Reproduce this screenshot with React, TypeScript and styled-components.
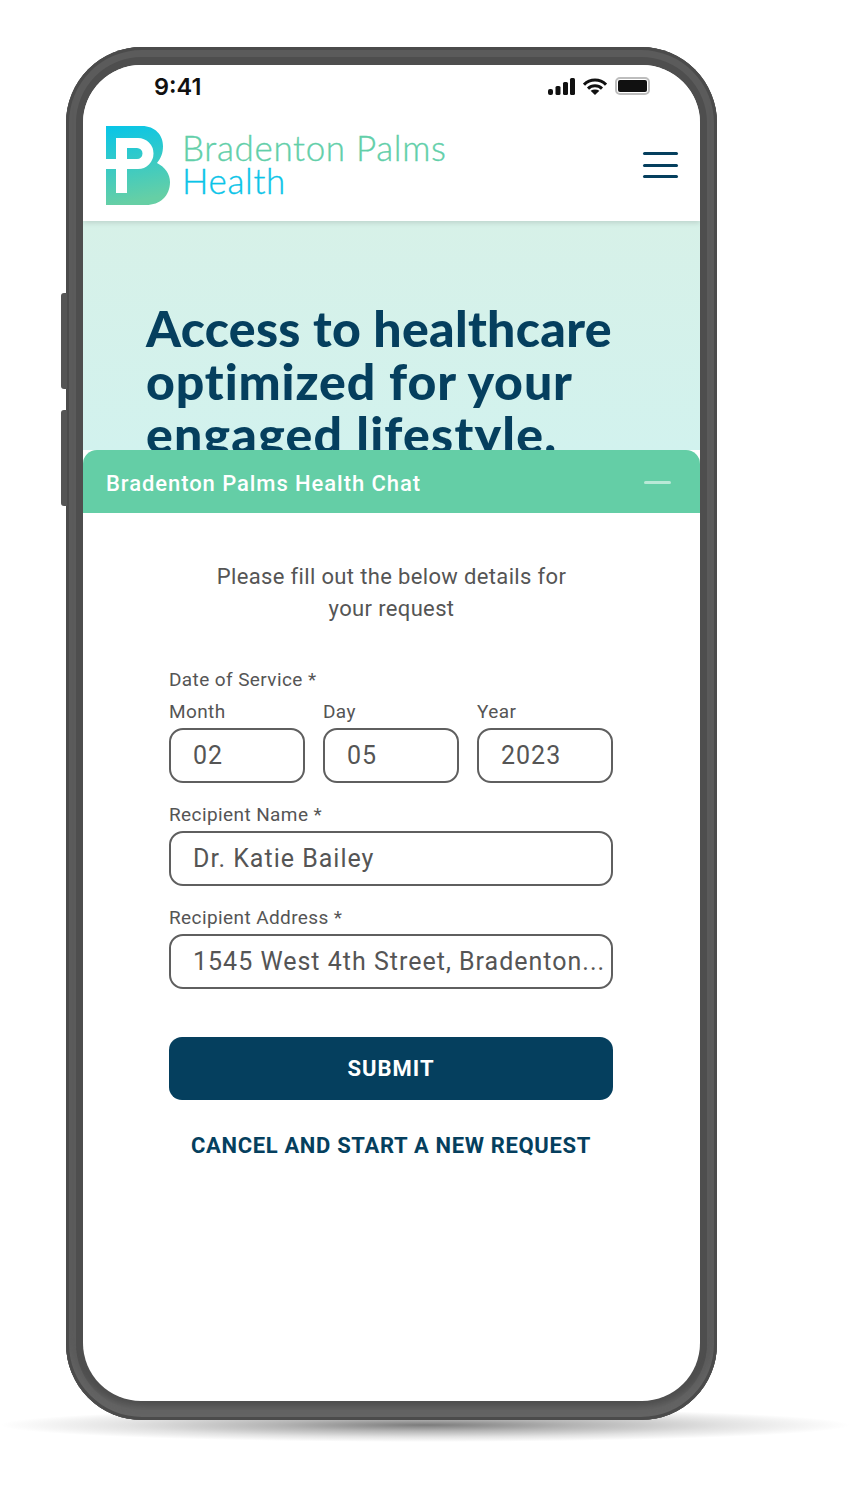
import React from "react";
import styled, { createGlobalStyle } from "styled-components";

const Global = createGlobalStyle`
  html, body { margin: 0; padding: 0; background: #fff; }
  body { font-family: Roboto, "Liberation Sans", sans-serif; }
  * { box-sizing: border-box; }
`;

const Stage = styled.div`
  position: relative;
  width: 864px;
  height: 1488px;
  padding: 47px 0 0 66px;
  overflow: hidden;
  background: #fff;
`;

const FloorShadow = styled.div`
  position: absolute;
  left: 0;
  top: 1408px;
  width: 850px;
  height: 34px;
  border-radius: 50%;
  background: radial-gradient(ellipse 50% 50% at 50% 50%, rgba(100,100,100,.85) 0%, rgba(140,140,140,.65) 35%, rgba(190,190,190,.45) 70%, rgba(255,255,255,0) 100%);
`;

const Phone = styled.div`
  position: relative;
  width: 651px;
  height: 1373px;
  padding: 18px 17px 19px 17px;
  border-radius: 76px;
  background: #4e4e4e;
  box-shadow: inset 0 0 0 3px #4b4b4b, inset 0 -14px 6px #636363, inset 0 0 0 10px #5b5b5b;
`;

const SideButton = styled.div<{ $top: number }>`
  position: absolute;
  left: -5px;
  top: ${(p) => p.$top}px;
  width: 6px;
  height: 96px;
  border-radius: 3px 0 0 3px;
  background: #555;
`;

const Screen = styled.div`
  position: relative;
  height: 100%;
  display: flex;
  flex-direction: column;
  border-radius: 58px;
  overflow: hidden;
  background: #fff;
`;

const Top = styled.header`
  position: relative;
  z-index: 1;
  flex: none;
  height: 156px;
  background: #fff;
  box-shadow: 0 2px 5px rgba(0, 0, 0, 0.12);
`;

const StatusBar = styled.div`
  display: flex;
  align-items: center;
  justify-content: space-between;
  height: 42px;
  padding: 0 50px 0 71px;
`;

const Time = styled.span`
  font-family: Inter, sans-serif;
  font-weight: 600;
  font-size: 23.5px;
  color: #111;
`;

const StatusIcons = styled.div`
  display: flex;
  align-items: center;
  gap: 8px;
`;

const Battery = styled.div`
  width: 35px;
  height: 18px;
  padding: 1px;
  border: 2px solid #bdbdbd;
  border-radius: 5px;
  &::after {
    content: "";
    display: block;
    height: 100%;
    background: #111;
    border-radius: 2px;
  }
`;

const BrandRow = styled.div`
  display: flex;
  align-items: center;
  height: 80px;
  margin-top: 18px;
  padding: 0 22px 0 23px;
`;

const BrandName = styled.div`
  margin: -2px 0 0 12px;
  font-family: Lato, sans-serif;
  font-weight: 300;
  font-size: 35px;
  line-height: 33px;
  letter-spacing: 0.65px;
  -webkit-text-stroke: 0.35px currentColor;
`;

const BrandLine = styled.div<{ $color: string }>`
  color: ${(p) => p.$color};
`;

const Burger = styled.div`
  margin-left: auto;
  display: flex;
  flex-direction: column;
  gap: 8.5px;
  width: 35px;
`;

const BurgerBar = styled.span`
  height: 3px;
  border-radius: 2px;
  background: #053f5e;
`;

const Hero = styled.section`
  flex: none;
  height: 229px;
  overflow: hidden;
  padding: 81px 20px 0 63px;
  background: linear-gradient(#d7f1e8, #d2f2ee);
`;

const HeroTitle = styled.h1`
  margin: 0;
  font-family: Lato, sans-serif;
  font-weight: 900;
  font-size: 50px;
  line-height: 53px;
  color: #053f5e;
`;

const HeroLine = styled.span<{ $tracking: number }>`
  display: block;
  white-space: nowrap;
  letter-spacing: ${(p) => p.$tracking}px;
`;

const Chat = styled.section`
  flex: 1;
  display: flex;
  flex-direction: column;
  align-items: center;
`;

const ChatHead = styled.div`
  align-self: stretch;
  display: flex;
  align-items: center;
  justify-content: space-between;
  height: 63px;
  padding: 4px 29px 0 23px;
  border-radius: 14px 14px 0 0;
  background: #64cea6;
  color: #fff;
  font-weight: 500;
  font-size: 22px;
  letter-spacing: 0.93px;
`;

const Minimize = styled.span`
  width: 27px;
  height: 3px;
  margin-top: -2px;
  border-radius: 2px;
  background: rgba(255, 255, 255, 0.55);
`;

const Intro = styled.p`
  margin: 48px 0 0;
  text-align: center;
  font-size: 22px;
  line-height: 32px;
  letter-spacing: 0.35px;
  color: #555;
`;

const Form = styled.form`
  width: 444px;
  margin: 44px 1px 0 0;
  display: flex;
  flex-direction: column;
`;

const Label = styled.div`
  font-size: 19px;
  line-height: 22px;
  letter-spacing: 0.4px;
  color: #555;
`;

const DateGrid = styled.div`
  display: grid;
  grid-template-columns: repeat(3, 136px);
  justify-content: space-between;
  margin-top: 10px;
`;

const FieldGroup = styled.div`
  display: flex;
  flex-direction: column;
  gap: 5px;
  margin-top: 21px;
`;

const DateGroup = styled.div`
  display: flex;
  flex-direction: column;
  gap: 5px;
`;

const Field = styled.div`
  display: flex;
  align-items: center;
  height: 55px;
  padding-left: 22px;
  border: 2px solid #5f5f5f;
  border-radius: 14px;
  font-size: 25px;
  letter-spacing: 1px;
  color: #555;
  white-space: nowrap;
  overflow: hidden;
`;

const Submit = styled.button`
  height: 63px;
  margin-top: 48px;
  border: 0;
  border-radius: 13px;
  background: #053f5e;
  color: #fff;
  font-family: Roboto, sans-serif;
  font-weight: 700;
  font-size: 22px;
  letter-spacing: 1px;
`;

const Cancel = styled.div`
  margin-top: 33px;
  text-align: center;
  font-weight: 700;
  font-size: 22px;
  line-height: 26px;
  letter-spacing: 0.66px;
  color: #053f5e;
`;

const Logo = () => (
  <svg width="64" height="79" viewBox="0 0 64 79" style={{ flex: "none" }}>
    <defs>
      <linearGradient id="lg" x1="0" y1="0" x2="0.15" y2="1">
        <stop offset="0" stopColor="#07c5e8" />
        <stop offset="1" stopColor="#66cfa5" />
      </linearGradient>
    </defs>
    <path
      fill="url(#lg)"
      d="M0 0H36C49 0 57 9 57 20C57 27 55 32 51 37C59 41 64 48 64 56C64 70 54 79 40 79H0Z"
    />
    <path
      fill="#fff"
      fillRule="evenodd"
      d="M10 12H32A15.5 15.5 0 0 1 32 43H21V67H10V43H0V33H10ZM21 22V33H31A5.5 5.5 0 0 0 31 22Z"
    />
  </svg>
);

const Signal = () => (
  <svg width="27" height="17" viewBox="0 0 27 17">
    <g fill="#111">
      <rect x="0" y="11" width="5" height="6" rx="2" />
      <rect x="7.5" y="8" width="5" height="9" rx="1.5" />
      <rect x="15" y="4" width="5" height="13" rx="1.5" />
      <rect x="22" y="0" width="5" height="17" rx="1.5" />
    </g>
  </svg>
);

const Wifi = () => (
  <svg width="24" height="17" viewBox="0 0 24 17">
    <g fill="none" stroke="#111" strokeWidth="3">
      <path d="M1 6.6C7 .4 17 .4 23 6.6" />
      <path d="M5 10.6C9 6.8 15 6.8 19 10.6" />
    </g>
    <path fill="#111" d="M7.6 12.8C10.2 11 13.8 11 16.4 12.8L12 17Z" />
  </svg>
);

export default function App() {
  return (
    <Stage>
      <Global />
      <FloorShadow />
      <Phone>
        <SideButton $top={246} />
        <SideButton $top={363} />
        <Screen>
          <Top>
            <StatusBar>
              <Time>9:41</Time>
              <StatusIcons>
                <Signal />
                <Wifi />
                <Battery />
              </StatusIcons>
            </StatusBar>
            <BrandRow>
              <Logo />
              <BrandName>
                <BrandLine $color="#62cfa9">Bradenton Palms</BrandLine>
                <BrandLine $color="#0bc4e8">Health</BrandLine>
              </BrandName>
              <Burger>
                <BurgerBar />
                <BurgerBar />
                <BurgerBar />
              </Burger>
            </BrandRow>
          </Top>
          <Hero>
            <HeroTitle>
              <HeroLine $tracking={0.3}>Access to healthcare</HeroLine>
              <HeroLine $tracking={0.9}>optimized for your</HeroLine>
              <HeroLine $tracking={1.2}>engaged lifestyle.</HeroLine>
            </HeroTitle>
          </Hero>
          <Chat>
            <ChatHead>
              Bradenton Palms Health Chat
              <Minimize />
            </ChatHead>
            <Intro>
              Please fill out the below details for
              <br />
              your request
            </Intro>
            <Form>
              <Label>Date of Service *</Label>
              <DateGrid>
                <DateGroup>
                  <Label>Month</Label>
                  <Field>02</Field>
                </DateGroup>
                <DateGroup>
                  <Label>Day</Label>
                  <Field>05</Field>
                </DateGroup>
                <DateGroup>
                  <Label>Year</Label>
                  <Field>2023</Field>
                </DateGroup>
              </DateGrid>
              <FieldGroup>
                <Label>Recipient Name *</Label>
                <Field>Dr. Katie Bailey</Field>
              </FieldGroup>
              <FieldGroup>
                <Label>Recipient Address *</Label>
                <Field>1545 West 4th Street, Bradenton...</Field>
              </FieldGroup>
              <Submit type="button">SUBMIT</Submit>
              <Cancel>CANCEL AND START A NEW REQUEST</Cancel>
            </Form>
          </Chat>
        </Screen>
      </Phone>
    </Stage>
  );
}
